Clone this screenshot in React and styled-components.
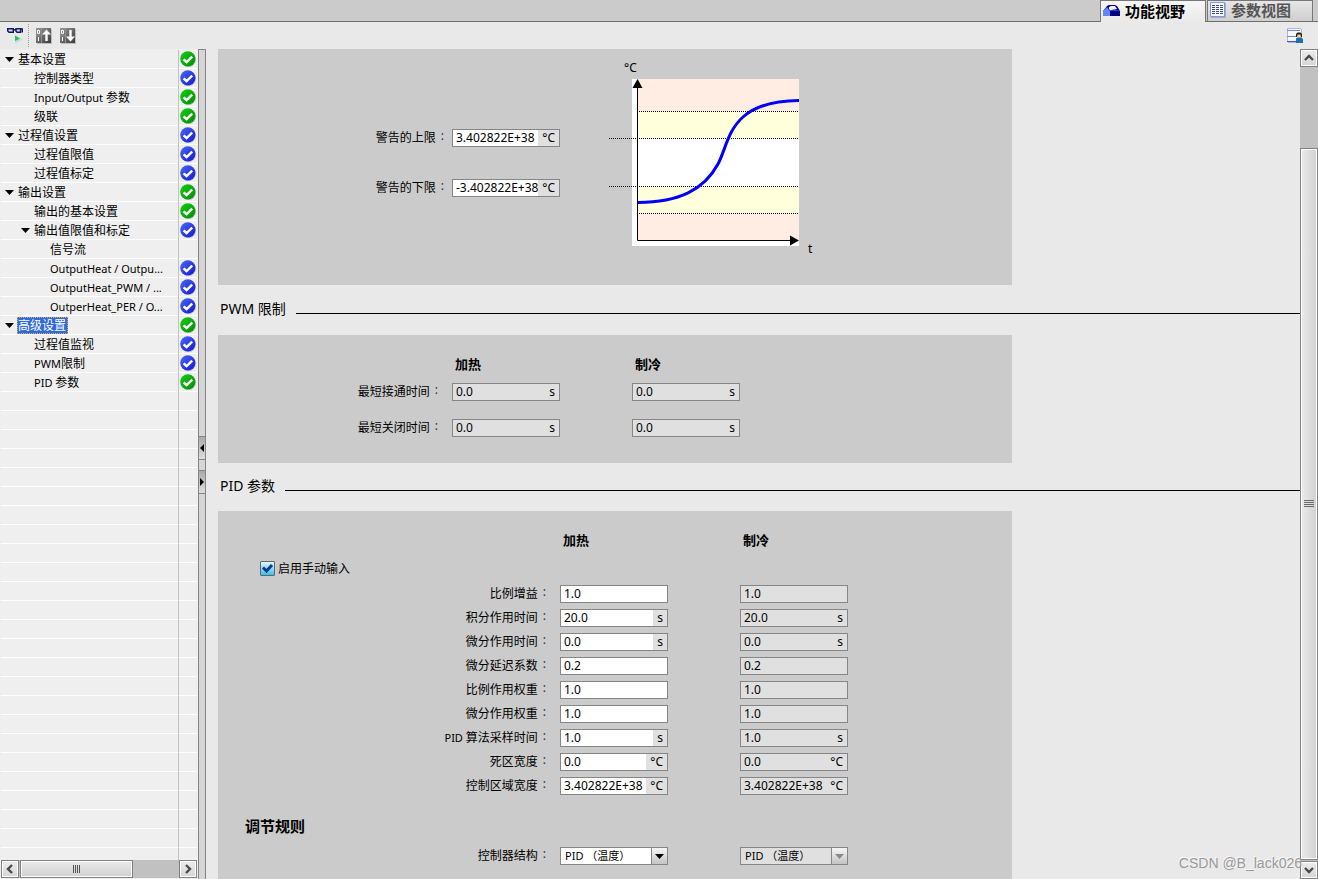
import React, { useState } from "react";
import styled, { createGlobalStyle, css } from "styled-components";

const treeItems = [
  { text: "基本设置", level: 0, open: true, status: "green" },
  { text: "控制器类型", level: 1, status: "blue" },
  { latin: "Input/Output ", text: "参数", level: 1, status: "green" },
  { text: "级联", level: 1, status: "green" },
  { text: "过程值设置", level: 0, open: true, status: "blue" },
  { text: "过程值限值", level: 1, status: "blue" },
  { text: "过程值标定", level: 1, status: "blue" },
  { text: "输出设置", level: 0, open: true, status: "green" },
  { text: "输出的基本设置", level: 1, status: "green" },
  { text: "输出值限值和标定", level: 1, open: true, status: "blue" },
  { text: "信号流", level: 2 },
  { latin: "OutputHeat / Outpu...", level: 2, status: "blue" },
  { latin: "OutputHeat_PWM / ...", level: 2, status: "blue" },
  { latin: "OutperHeat_PER / O...", level: 2, status: "blue" },
  { text: "高级设置", level: 0, open: true, status: "green", selected: true },
  { text: "过程值监视", level: 1, status: "blue" },
  { latin: "PWM", text: "限制", level: 1, status: "blue" },
  { latin: "PID ", text: "参数", level: 1, status: "green" },
];

const pwmRows = [
  { text: "最短接通时间", value: "0.0", unit: "s" },
  { text: "最短关闭时间", value: "0.0", unit: "s" },
];

const pidRows = [
  { text: "比例增益", value: "1.0" },
  { text: "积分作用时间", value: "20.0", unit: "s" },
  { text: "微分作用时间", value: "0.0", unit: "s" },
  { text: "微分延迟系数", value: "0.2" },
  { text: "比例作用权重", value: "1.0" },
  { text: "微分作用权重", value: "1.0" },
  { latin: "PID ", text: "算法采样时间", value: "1.0", unit: "s" },
  { text: "死区宽度", value: "0.0", unit: "°C" },
  { text: "控制区域宽度", value: "3.402822E+38", unit: "°C" },
];

function StatusIcon({ color }) {
  const [light, dark] = color === "green" ? ["#12cf12", "#068a06"] : ["#4a6cf0", "#1414d8"];
  const id = `status-${color}`;
  return (
    <svg width="17" height="17" viewBox="0 0 17 17">
      <defs>
        <linearGradient id={id} x1="0" y1="0" x2="1" y2="1">
          <stop offset="0" stopColor={light} />
          <stop offset="1" stopColor={dark} />
        </linearGradient>
      </defs>
      <circle cx="8.6" cy="8.6" r="7.5" fill="#c4c4c4" />
      <circle cx="7.8" cy="7.8" r="7.6" fill={`url(#${id})`} />
      <path d="M3.600 8.300l3 2.700 5.600-5.400" fill="none" stroke="#fff" strokeWidth="2.4" />
    </svg>
  );
}

function GlassesIcon() {
  return (
    <svg width="17" height="17" viewBox="0 0 17 17">
      <path
        d="M.7 1.700h5.600v3.600H2L.7 4zM9 1.700h4.600v3.600H10L9 4.300z"
        fill="#cfd3ea"
        stroke="#16165e"
        strokeWidth="1.4"
      />
      <path d="M6.300 2.700H9M13.600 2h1.700v3.600" fill="none" stroke="#16165e" strokeWidth="1.4" />
      <path d="M8 8.500l8 4-8 4z" fill="#c3dfcd" />
      <path d="M8 8.500l5 3-5 2.600z" fill="#19c45a" />
    </svg>
  );
}

function TransferIcon({ up }) {
  return (
    <svg width="16" height="16" viewBox="0 0 16 16">
      <defs>
        <linearGradient id="transfer" x1="0" y1="0" x2="1" y2="1">
          <stop offset="0" stopColor="#999" />
          <stop offset="1" stopColor="#3c3c3c" />
        </linearGradient>
      </defs>
      <path d="M1 1h15v15H1z" fill="#bdbdbd" />
      <path d="M0 0h15v15H0z" fill="url(#transfer)" />
      <path d="M5.500 0v15M0 7.500h5" stroke="#8d8d8d" />
      <path d="M1.500 2.500h2v3h-2zM2.500 9v4" fill="none" stroke="#fff" />
      <path
        d={up ? "M10.500 13V5" : "M10.500 2v8"}
        stroke="#fff"
        strokeWidth="2.4"
      />
      <path d={up ? "M10.500 1.500L15 6.500H6z" : "M10.500 13.500L15 8.500H6z"} fill="#fff" />
    </svg>
  );
}

function ToolboxIcon() {
  return (
    <svg width="17" height="13" viewBox="0 0 17 13">
      <path d="M0 12V7l4-5 2-1h6l2 1 3 5v5z" fill="#00007f" />
      <path d="M0 12V7l4-4 3 4v5z" fill="#6388f4" />
      <path d="M6 5V3l2-1h4l2 3-4 1-2 1z" fill="#eef1ff" />
      <path d="M7 7l3-1 6 1" fill="none" stroke="#2f49c8" />
    </svg>
  );
}

function ListIcon() {
  return (
    <svg width="17" height="16" viewBox="0 0 17 16">
      <path d="M1 1h15v15H1z" fill="#a9abb8" />
      <path d="M.5.5h14v14H.5z" fill="#f4f6ff" stroke="#7f97dc" />
      <path d="M2 3.500h11M2 5.500h11M2 7.500h11M2 9.500h11M2 11.500h11" stroke="#434a77" strokeDasharray="3 1" />
    </svg>
  );
}

function UserViewIcon() {
  return (
    <svg width="16" height="16" viewBox="0 0 16 16">
      <path d="M1 1h14v14H1z" fill="#b3b6c4" />
      <path d="M0 0h14v14H0z" fill="#f6f8ff" />
      <path d="M.5 0v14M0 .5h14" stroke="#a9b8ee" />
      <path d="M0 2.500h13M0 8.500h9" stroke="#7d8bb8" />
      <path d="M0 13.500h10" stroke="#3d5bd0" />
      <path d="M9 9V6l1.500-1.500h3L15 6v3h-1l-1-2h-2l-1 2z" fill="#2c2114" />
      <path d="M10.500 6.500h3v3h-3z" fill="#f6cf9a" />
      <path d="M9 15v-4.500L10.500 9.500h3.500l2 1.500v4z" fill="#1d6fae" />
    </svg>
  );
}

function Chevron({ dir }) {
  const paths = {
    up: "M2 8l4-4 4 4",
    down: "M2 4l4 4 4-4",
    left: "M8 2L4 6l4 4",
    right: "M4 2l4 4-4 4",
  };
  return (
    <svg width="12" height="12" viewBox="0 0 12 12">
      <path d={paths[dir]} fill="none" stroke="#4a4a4a" strokeWidth="2.4" />
    </svg>
  );
}

function LimitChart() {
  return (
    <ChartSvg viewBox="0 0 220 200" role="img" aria-label="°C / t">
      <path d="M27 21h167v167H27z" fill="#fff" />
      <path d="M33 21h161v32H33zM33 155h161v27H33z" fill="#ffece3" />
      <path d="M33 53h161v27H33zM33 128h161v27H33z" fill="#ffffdc" />
      <path
        d="M34 53.5h160M4 80.5h190M4 128.5h190M34 155.5h160"
        stroke="#000"
        strokeDasharray="1 1"
      />
      <path d="M32.5 26v156.500H190" fill="none" stroke="#000" />
      <path d="M32.500 21l5 9h-10zM194 182.500l-9-5v10z" />
      <path
        d="M33 144.500C74 144 99 132 113 106C125 84 123 43 194 42.500"
        fill="none"
        stroke="#0000f5"
        strokeWidth="3"
      />
      <text x="19" y="14">°C</text>
      <text x="203" y="195">t</text>
    </ChartSvg>
  );
}

function Caption({ id, latin, text, gap }) {
  return (
    <FieldLabel htmlFor={id} $gap={gap}>
      <span>
        {latin && <Latin>{latin}</Latin>}
        {text}
      </span>
      <Colon>:</Colon>
    </FieldLabel>
  );
}

function Field({ id, label, value, unit, locked }) {
  return (
    <FieldBox $locked={locked}>
      <FieldInput id={id} aria-label={label} defaultValue={value} readOnly={locked} />
      {unit && <Unit>{unit}</Unit>}
    </FieldBox>
  );
}

function StructureSelect({ id, label, locked }) {
  return (
    <FieldBox $locked={locked}>
      <Select id={id} aria-label={label} disabled={locked}>
        <option>PID （温度）</option>
      </Select>
      <SelectArrow $locked={locked}>
        <svg width="9" height="5" viewBox="0 0 9 5">
          <path d="M0 0h9L4.500 5z" fill="currentColor" />
        </svg>
      </SelectArrow>
    </FieldBox>
  );
}

function Sidebar() {
  return (
    <SidebarWrap>
      <Tree>
        {treeItems.map(({ latin, text, level, open, status, selected }) => (
          <TreeRow key={(latin || "") + (text || "")}>
            <TreeName $level={level}>
              <Arrow>
                {open && (
                  <svg width="9" height="5" viewBox="0 0 9 5">
                    <path d="M0 0h9L4.500 5z" />
                  </svg>
                )}
              </Arrow>
              <TreeText $selected={selected}>
                {latin && <Latin>{latin}</Latin>}
                {text}
              </TreeText>
            </TreeName>
            <TreeStatus>{status && <StatusIcon color={status} />}</TreeStatus>
          </TreeRow>
        ))}
        <TreeFill />
      </Tree>
      <HScroll>
        <ScrollButton aria-label="向左">
          <Chevron dir="left" />
        </ScrollButton>
        <HThumb>
          <svg width="8" height="8" viewBox="0 0 8 8">
            <path d="M.5 0v8M2.500 0v8M4.500 0v8M6.500 0v8" stroke="#555" />
          </svg>
        </HThumb>
        <ScrollButton aria-label="向右">
          <Chevron dir="right" />
        </ScrollButton>
      </HScroll>
    </SidebarWrap>
  );
}

function App() {
  const [manual, setManual] = useState(true);

  return (
    <Page>
      <GlobalStyle />
      <TabBar>
        <Tab $active>
          <ToolboxIcon />
          功能视野
        </Tab>
        <Tab>
          <ListIcon />
          参数视图
        </Tab>
      </TabBar>
      <Toolbar>
        <ToolButton aria-label="监视">
          <GlassesIcon />
        </ToolButton>
        <ToolDivider />
        <ToolGroup>
          <ToolButton aria-label="上传">
            <TransferIcon up />
          </ToolButton>
          <ToolButton aria-label="下载">
            <TransferIcon />
          </ToolButton>
        </ToolGroup>
        <ToolButton aria-label="用户视图">
          <UserViewIcon />
        </ToolButton>
      </Toolbar>
      <Body>
        <Sidebar />
        <Splitter>
          <SplitButton aria-label="折叠">
            <svg width="4" height="8" viewBox="0 0 4 8">
              <path d="M4 0v8L0 4z" />
            </svg>
          </SplitButton>
          <SplitButton aria-label="展开">
            <svg width="4" height="8" viewBox="0 0 4 8">
              <path d="M0 0v8l4-4z" />
            </svg>
          </SplitButton>
        </Splitter>
        <Content>
          <WarningPanel>
            <WarningFields>
              <FormRow $label={234}>
                <Caption id="warn-high" text="警告的上限" gap={8} />
                <Field id="warn-high" value="3.402822E+38" unit="°C" />
              </FormRow>
              <FormRow $label={234}>
                <Caption id="warn-low" text="警告的下限" gap={8} />
                <Field id="warn-low" value="-3.402822E+38" unit="°C" />
              </FormRow>
            </WarningFields>
            <LimitChart />
          </WarningPanel>

          <SectionTitle $height={50}>PWM 限制</SectionTitle>
          <Panel>
            <FormRow $label={234}>
              <span />
              <ColumnTitle>加热</ColumnTitle>
              <ColumnTitle>制冷</ColumnTitle>
            </FormRow>
            <Rows $top={10} $gap={18}>
              {pwmRows.map(({ text, value, unit }, i) => (
                <FormRow key={text} $label={234}>
                  <Caption id={`pwm-${i}`} text={text} gap={14} />
                  <Field id={`pwm-${i}`} value={value} unit={unit} locked />
                  <Field label={`${text} 制冷`} value={value} unit={unit} locked />
                </FormRow>
              ))}
            </Rows>
          </Panel>

          <SectionTitle $height={48}>PID 参数</SectionTitle>
          <Panel>
            <FormRow $label={342}>
              <span />
              <ColumnTitle>加热</ColumnTitle>
              <ColumnTitle>制冷</ColumnTitle>
            </FormRow>
            <CheckLabel>
              <CheckBox
                type="checkbox"
                checked={manual}
                onChange={(e) => setManual(e.target.checked)}
              />
              启用手动输入
            </CheckLabel>
            <Rows $top={8} $gap={6}>
              {pidRows.map(({ latin, text, value, unit }, i) => (
                <FormRow key={text} $label={342}>
                  <Caption id={`pid-${i}`} latin={latin} text={text} gap={14} />
                  <Field id={`pid-${i}`} value={value} unit={unit} />
                  <Field label={`${text} 制冷`} value={value} unit={unit} locked />
                </FormRow>
              ))}
            </Rows>
            <RuleTitle>调节规则</RuleTitle>
            <FormRow $label={342}>
              <Caption id="structure" text="控制器结构" gap={14} />
              <StructureSelect id="structure" />
              <StructureSelect label="控制器结构 制冷" locked />
            </FormRow>
          </Panel>
        </Content>
        <VScroll>
          <ScrollButton aria-label="向上">
            <Chevron dir="up" />
          </ScrollButton>
          <VThumb>
            <svg width="10" height="8" viewBox="0 0 10 8">
              <path d="M0 .5h10M0 2.500h10M0 4.500h10M0 6.500h10" stroke="#666" />
            </svg>
          </VThumb>
          <ScrollButton aria-label="向下">
            <Chevron dir="down" />
          </ScrollButton>
        </VScroll>
      </Body>
      <Watermark>CSDN @B_lack026</Watermark>
    </Page>
  );
}

export default App;

const GlobalStyle = createGlobalStyle`
  * {
    box-sizing: border-box;
  }

  body {
    margin: 0;
  }

  body, button, input, select {
    font-family: "Noto Sans", "Noto Sans CJK SC", sans-serif;
    font-size: 12px;
    color: #000;
  }

  button {
    padding: 0;
    border: 0;
    background: none;
  }

  svg {
    display: block;
    flex: none;
  }
`;

const Page = styled.div`
  position: relative;
  display: flex;
  flex-direction: column;
  height: 100vh;
  overflow: hidden;
  background: #e9e9e9;
`;

const TabBar = styled.div`
  display: flex;
  justify-content: flex-end;
  flex: none;
  gap: 1px;
  height: 22px;
  padding-right: 5px;
  background: #cbcbcb;
  box-shadow: inset 0 -1px #6e6e6e;
`;

const Tab = styled.button`
  display: flex;
  align-items: center;
  gap: ${({ $active }) => ($active ? "5px" : "4px")};
  width: 106px;
  height: ${({ $active }) => ($active ? "22px" : "21px")};
  padding: 0 0 2px 2px;
  border: 1px solid #777;
  border-bottom: 0;
  background: ${({ $active }) =>
    $active ? "linear-gradient(#f6f6f6, #e9e9e9)" : "linear-gradient(#e6e6e6, #cfcfcf)"};
  color: ${({ $active }) => ($active ? "#000" : "#555")};
  font-size: 15px;
  line-height: 18px;
  font-weight: bold;
`;

const Toolbar = styled.div`
  display: flex;
  align-items: center;
  flex: none;
  height: 27px;
  padding: 0 15px 0 7px;
`;

const ToolButton = styled.button`
  display: flex;
`;

const ToolDivider = styled.span`
  height: 23px;
  margin: 0 7px 0 4px;
  border-left: 1px dotted #999;
`;

const ToolGroup = styled.div`
  display: flex;
  flex: 1;
  gap: 8px;
`;

const Body = styled.div`
  display: flex;
  flex: 1;
  min-height: 0;
`;

const SidebarWrap = styled.aside`
  display: flex;
  flex-direction: column;
  flex: none;
  width: 198px;
  padding: 1px;
  background: #efefef;
`;

const Tree = styled.ul`
  display: flex;
  flex-direction: column;
  flex: 1;
  min-height: 0;
  margin: 0;
  padding: 0;
  list-style: none;
  background: repeating-linear-gradient(#efefef 0 18px, #fff 18px 19px);
`;

const TreeRow = styled.li`
  display: flex;
  flex: none;
  height: 19px;
`;

const TreeName = styled.div`
  display: flex;
  align-items: center;
  flex: 1;
  min-width: 0;
  padding: 0 0 1px ${({ $level }) => $level * 16 + 4}px;
  white-space: pre;
`;

const Arrow = styled.span`
  width: 12px;
`;

const TreeText = styled.span`
  height: 17px;
  padding-right: 1px;
  border: 1px solid transparent;
  line-height: 15px;
  ${({ $selected }) =>
    $selected &&
    css`
      border: 1px dotted #d8b070;
      background: #316ad5;
      color: #fff;
    `}
`;

const TreeStatus = styled.div`
  width: 19px;
  padding: 1px 0 0 1px;
  border-left: 1px solid #c3c3c3;
`;

const TreeFill = styled.li`
  flex: 1;
  align-self: flex-end;
  width: 19px;
  border-left: 1px solid #c3c3c3;
`;

const Latin = styled.span`
  font-size: 11px;
`;

const HScroll = styled.div`
  display: flex;
  gap: 1px;
  height: 18px;
  background: #c1c1c1;
`;

const ScrollButton = styled.button`
  display: flex;
  align-items: center;
  justify-content: center;
  flex: none;
  width: 18px;
  height: 18px;
  border: 1px solid #828282;
  box-shadow: inset 0 0 0 1px #fff;
  background: linear-gradient(#ececec, #d6d6d6);
`;

const HThumb = styled.div`
  display: flex;
  align-items: center;
  justify-content: center;
  width: 113px;
  margin-right: auto;
  border: 1px solid #828282;
  box-shadow: inset 0 0 0 1px #fff;
  background: linear-gradient(#ececec, #d0d0d0);
`;

const VScroll = styled.div`
  display: flex;
  flex-direction: column;
  flex: none;
  width: 18px;
  background: #c1c1c1;
`;

const VThumb = styled.div`
  display: flex;
  align-items: center;
  justify-content: center;
  flex: 1;
  margin: 81px 0 1px;
  border: 1px solid #828282;
  box-shadow: inset 0 0 0 1px #fff;
  background: linear-gradient(90deg, #ececec, #d0d0d0);
`;

const Splitter = styled.div`
  display: flex;
  flex-direction: column;
  justify-content: center;
  flex: none;
  gap: 10px;
  width: 8px;
  border: 1px solid #858585;
  border-bottom: 0;
  background: #d6d6d6;
`;

const SplitButton = styled.button`
  display: flex;
  align-items: center;
  justify-content: center;
  height: 24px;
  border: solid #858585;
  border-width: 1px 0;
  background: linear-gradient(#aaa, #dedede);
`;

const Content = styled.main`
  flex: 1;
  min-width: 0;
  padding-left: 12px;
  overflow: hidden;
`;

const Panel = styled.section`
  max-width: 794px;
  padding: 20px 0 26px;
  background: #cbcbcb;
`;

const WarningPanel = styled(Panel)`
  display: flex;
  gap: 45px;
  height: 236px;
  padding: 9px 0 0;
`;

const WarningFields = styled.div`
  display: flex;
  flex-direction: column;
  gap: 32px;
  padding-top: 71px;
`;

const ChartSvg = styled.svg`
  width: 220px;
  height: 200px;
  font-size: 12px;
`;

const SectionTitle = styled.h2`
  display: flex;
  align-items: center;
  gap: 10px;
  height: ${({ $height }) => $height}px;
  margin: 0;
  padding: 0 0 2px 2px;
  font-size: 14px;
  line-height: 20px;
  font-weight: normal;

  &::after {
    content: "";
    flex: 1;
    margin-top: 8px;
    border-top: 1px solid #000;
  }
`;

const FormRow = styled.div`
  display: grid;
  grid-template-columns: ${({ $label }) => $label}px;
  grid-auto-columns: 108px;
  grid-auto-flow: column;
  align-items: center;
  height: 18px;

  & > :nth-child(3) {
    margin-left: 72px;
  }
`;

const Rows = styled.div`
  display: flex;
  flex-direction: column;
  gap: ${({ $gap }) => $gap}px;
  padding-top: ${({ $top }) => $top}px;
`;

const ColumnTitle = styled.strong`
  padding-left: 3px;
  font-size: 13px;
  line-height: 18px;
  white-space: nowrap;
`;

const FieldLabel = styled.label`
  display: flex;
  justify-content: flex-end;
  gap: 5px;
  padding-right: ${({ $gap }) => $gap}px;
  line-height: 18px;
  white-space: pre;
`;

const Colon = styled.span`
  color: #234;
  line-height: 14px;
`;

const FieldBox = styled.div`
  display: flex;
  width: 108px;
  height: 18px;
  border: 1px solid #868686;
  background: ${({ $locked }) => ($locked ? "#e0e0e0" : "#fff")};
`;

const FieldInput = styled.input`
  flex: 1;
  min-width: 0;
  padding: 0 0 0 3px;
  border: 0;
  outline: 0;
  background: transparent;
  line-height: 16px;
`;

const Unit = styled.span`
  padding: 0 4px;
  background: #e0e0e0;
  line-height: 16px;
`;

const CheckLabel = styled.label`
  display: flex;
  align-items: center;
  gap: 3px;
  height: 18px;
  margin-top: 10px;
  padding-left: 42px;
`;

const CheckBox = styled.input`
  appearance: none;
  width: 15px;
  height: 15px;
  margin: 0;
  border: 1px solid #666;
  border-radius: 1px;
  background: #fff;

  &:checked {
    background:
      url("data:image/svg+xml,%3Csvg xmlns='http://www.w3.org/2000/svg' viewBox='0 0 13 13'%3E%3Cpath d='M2 5.500l3.500 3.500L11 3' fill='none' stroke='%230b3c8c' stroke-width='3'/%3E%3C/svg%3E"),
      linear-gradient(#e6f4fb, #35c3ee);
  }
`;

const RuleTitle = styled.h3`
  margin: 21px 0 11px;
  padding-left: 27px;
  font-size: 15px;
  line-height: 20px;
`;

const Select = styled.select`
  flex: 1;
  min-width: 0;
  appearance: none;
  padding: 0 0 0 4px;
  border: 0;
  outline: 0;
  background: transparent;
  font-size: 11px;
  line-height: 16px;
  opacity: 1;
`;

const SelectArrow = styled.span`
  display: flex;
  align-items: center;
  justify-content: center;
  width: 16px;
  border-left: 1px solid #868686;
  background: linear-gradient(#f6f6f6, #c4c4c4);
  color: ${({ $locked }) => ($locked ? "#8a8a8a" : "#000")};
  pointer-events: none;
`;

const Watermark = styled.div`
  position: absolute;
  right: 16px;
  bottom: 7px;
  color: #9a9a9a;
  font-family: "Liberation Sans", sans-serif;
  font-size: 14px;
  line-height: 18px;
  text-shadow: -1px -1px #f8f8f8;
  pointer-events: none;
`;
